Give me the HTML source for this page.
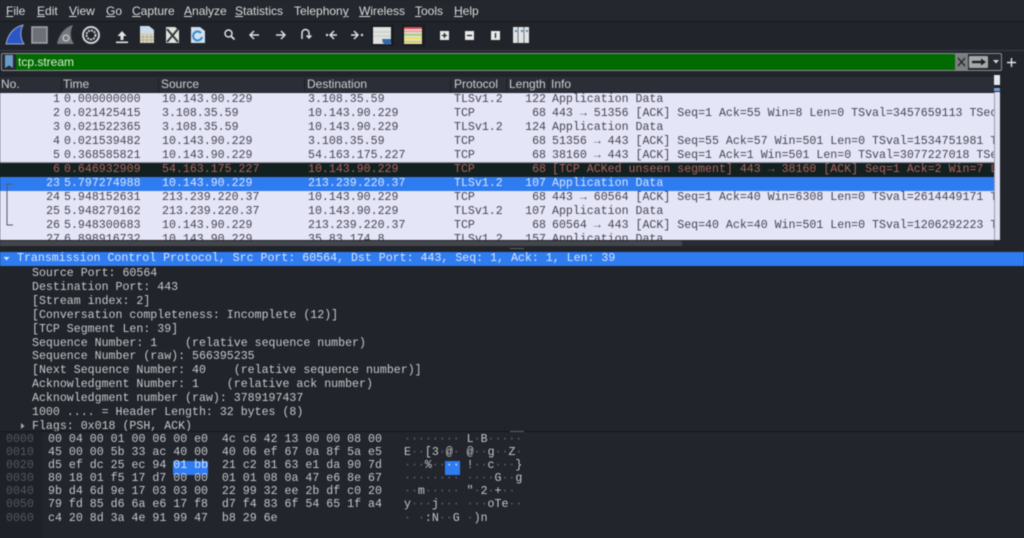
<!DOCTYPE html>
<html><head><meta charset="utf-8">
<style>
html,body{margin:0;padding:0;width:1024px;height:538px;overflow:hidden;background:#21242b}
#w{position:relative;width:1024px;height:538px;overflow:hidden;filter:blur(.45px);font-family:"Liberation Sans",sans-serif}
.a{position:absolute}
.m{position:absolute;top:4px;font-size:12px;line-height:14px;color:#dcdcdc;white-space:pre}
.h{position:absolute;top:77px;font-size:12px;line-height:15px;color:#cfd0d3;white-space:pre}
.s{position:absolute;top:78px;width:1px;height:14px;background:#1d1f25}
#list{position:absolute;left:0;top:93px;width:994px;height:147px;overflow:hidden;background:#e5e5f8;font:11.6px/14px "Liberation Mono",monospace;color:#45454f}
.r{position:relative;height:14px;white-space:pre}
.r span{position:absolute;top:0}
.n{right:934px}.t{left:64px}.c1{left:162px}.c2{left:308px}.c3{left:454px}.l{right:448px}.i{left:552px}
.blk{background:#12201f;color:#b0635d}
.sel{background:#2f7bf0;color:#d6e6fb}
#tree{position:absolute;left:0;top:267px;width:1024px;height:164px;overflow:hidden;font:11.6px/13.9px "Liberation Mono",monospace;color:#c9cacc;white-space:pre}
#tree div{padding-left:32px}
#hex,#off,#asc{position:absolute;top:433px;font:11.6px/13.1px "Liberation Mono",monospace;white-space:pre}
#hex{left:48px;color:#c6c7ca}
#off{left:6px;color:#54575e}
#asc{left:404px;color:#c6c7ca}
#asc i{font-style:normal;color:#5f626a}
</style></head><body><div id="w">
<div class="a" style="left:0;top:0;width:1024px;height:21px;background:#24272e"></div>
<div class="a" style="left:0;top:21px;width:1024px;height:1px;background:#16181c"></div>
<span class="m" style="left:6px"><u>F</u>ile</span>
<span class="m" style="left:37px"><u>E</u>dit</span>
<span class="m" style="left:69px"><u>V</u>iew</span>
<span class="m" style="left:106px"><u>G</u>o</span>
<span class="m" style="left:132px"><u>C</u>apture</span>
<span class="m" style="left:184px"><u>A</u>nalyze</span>
<span class="m" style="left:235px"><u>S</u>tatistics</span>
<span class="m" style="left:294px">Telephon<u>y</u></span>
<span class="m" style="left:359px"><u>W</u>ireless</span>
<span class="m" style="left:415px"><u>T</u>ools</span>
<span class="m" style="left:454px"><u>H</u>elp</span>

<svg class="a" style="left:0;top:22px" width="540" height="28" viewBox="0 0 540 28">
<path d="M6 22 C8 12 14 5 23 3 C20 9 20 16 24 22Z" fill="#2b56c8" stroke="#9aa8c8" stroke-width="1"/>
<rect x="32" y="5" width="15" height="16" fill="#6d7078" stroke="#a4a6ab" stroke-width="1.5"/>
<path d="M57 22 C59 12 65 5 73 3 C70 9 70 16 74 22Z" fill="#75777c"/>
<circle cx="66" cy="16" r="3" fill="none" stroke="#c4c5c8" stroke-width="1.3"/>
<circle cx="91" cy="13" r="8" fill="none" stroke="#d2d3d5" stroke-width="2"/>
<circle cx="91" cy="13" r="4.500" fill="none" stroke="#d2d3d5" stroke-width="2" stroke-dasharray="2 1"/>
<path d="M122 9 L117.500 14 H120.500 V18 H123.500 V14 H126.500Z" fill="#e4e4e4"/>
<rect x="116" y="19.500" width="12" height="1.600" fill="#e4e4e4"/>
<path d="M140 5 H150 L154 8 V21 H140Z" fill="#d9d5bc"/>
<path d="M140 4 H149 L154 8 V11 H140Z" fill="#c9dcee"/>
<path d="M143 12 V21 M147 12 V21 M151 12 V21 M140 15 H154 M140 18 H154" stroke="#a9a68e" stroke-width=".7"/>
<path d="M166 5 H175 L179 8 V21 H166Z" fill="#e0e3dc"/>
<path d="M167 7 L178 20 M178 7 L167 20" stroke="#33363a" stroke-width="2"/>
<path d="M191 5 H200 L205 9 V21 H191Z" fill="#cfe0f0"/>
<path d="M201 11 A4.500 4.500 0 1 0 202 15" fill="none" stroke="#3a88c8" stroke-width="2"/>
<circle cx="228.500" cy="11.500" r="3.500" fill="none" stroke="#e0e0e0" stroke-width="1.500"/>
<path d="M231 14 L234.500 17.500" stroke="#e0e0e0" stroke-width="1.800"/>
<path d="M259 13 H250 M254 9 L250 13 L254 17" fill="none" stroke="#e0e0e0" stroke-width="1.500"/>
<path d="M276 13 H285 M281 9 L285 13 L281 17" fill="none" stroke="#e0e0e0" stroke-width="1.500"/>
<path d="M302 17 V11 A3.500 3.500 0 0 1 309 11 V15 M306.500 13.500 L309 16 L311.500 13.500" fill="none" stroke="#e0e0e0" stroke-width="1.500"/>
<circle cx="327" cy="13" r="1.200" fill="#e0e0e0"/>
<path d="M337 13 H330 M334 9 L330 13 L334 17" fill="none" stroke="#e0e0e0" stroke-width="1.500"/>
<circle cx="362" cy="13" r="1.200" fill="#e0e0e0"/>
<path d="M351 13 H358 M354 9 L358 13 L354 17" fill="none" stroke="#e0e0e0" stroke-width="1.500"/>
<rect x="371" y="3" width="23" height="21" fill="#191b20"/>
<rect x="402" y="3" width="23" height="21" fill="#191b20"/>
<rect x="373" y="5" width="18" height="17" fill="#dfe1df"/>
<path d="M373 10 H391 M373 14 H391" stroke="#c6c8c6" stroke-width="1"/>
<path d="M382 17 H391 V21 L387 23 L383 21Z" fill="#2f6aa8"/>
<rect x="404" y="5" width="18" height="17" fill="#e8e8dc"/>
<rect x="404" y="5" width="18" height="2" fill="#d84a4a"/>
<rect x="404" y="8" width="18" height="2.500" fill="#e8a8b8"/>
<rect x="404" y="11.500" width="18" height="2.500" fill="#a8d088"/>
<rect x="404" y="15" width="18" height="2.500" fill="#e8dc78"/>
<rect x="404" y="18.500" width="18" height="2.500" fill="#d8d070"/>
<rect x="440" y="9" width="9" height="9" fill="#e8e8e8"/>
<path d="M442 13.500 H447 M444.500 11 V16" stroke="#222" stroke-width="1.300"/>
<rect x="465" y="9" width="9" height="9" fill="#e8e8e8"/>
<path d="M467 13.500 H472" stroke="#222" stroke-width="1.300"/>
<rect x="491" y="9" width="9" height="9" fill="#e8e8e8"/>
<path d="M495.500 11 V16" stroke="#222" stroke-width="1.300"/>
<rect x="513" y="5" width="16" height="16" fill="#dfe3e4"/>
<path d="M518 5 V21 M524 5 V21" stroke="#70757c" stroke-width="1"/>
<path d="M515 9 H517 M521 9 H523 M526 9 H528" stroke="#5a80a8" stroke-width="2"/>
</svg>

<div class="a" style="left:0;top:50px;width:1024px;height:1px;background:#3a3d44"></div>
<div class="a" style="left:1px;top:53px;width:1001px;height:18px;box-sizing:border-box;border:1px solid #8b8e93;border-radius:2px;background:#26292f"></div>
<div class="a" style="left:16px;top:54px;width:939px;height:16px;background:#016a00"></div>
<svg class="a" style="left:3px;top:55px" width="12" height="14"><path d="M2 0 H10 V13 L6 10.500 L2 13Z" fill="#6a9cc8"/></svg>
<span class="a" style="left:18px;top:55px;font-size:12px;line-height:15px;color:#d8ecd2">tcp.stream</span>
<div class="a" style="left:955px;top:54px;width:13px;height:16px;background:#7c7e80"></div>
<svg class="a" style="left:955px;top:54px" width="13" height="16"><path d="M3 4 L10 12 M10 4 L3 12" stroke="#2a2c30" stroke-width="1.400"/></svg>
<div class="a" style="left:969px;top:56px;width:19px;height:12px;background:#a6a8aa;border-radius:1px"></div>
<svg class="a" style="left:969px;top:56px" width="19" height="12"><path d="M3 6 H13" stroke="#1e2024" stroke-width="2.400"/><path d="M12 2.500 L17 6 L12 9.500Z" fill="#1e2024"/></svg>
<svg class="a" style="left:992px;top:59px" width="8" height="6"><path d="M1 1 H7 L4 4.500Z" fill="#d8d8d8"/></svg>
<svg class="a" style="left:1005px;top:56px" width="13" height="13"><path d="M6.500 2 V11 M2 6.500 H11" stroke="#e4e4e4" stroke-width="1.400"/></svg>

<div class="a" style="left:0;top:75px;width:1024px;height:18px;background:#21242b"></div>
<div class="a" style="left:0;top:77px;width:994px;height:15px;background:#2b2e36"></div>
<span class="h" style="left:1px">No.</span><span class="h" style="left:63px">Time</span><span class="h" style="left:161px">Source</span><span class="h" style="left:307px">Destination</span><span class="h" style="left:454px">Protocol</span><span class="h" style="left:509px">Length</span><span class="h" style="left:551px">Info</span>
<i class="s" style="left:61px"></i><i class="s" style="left:158px"></i><i class="s" style="left:304px"></i><i class="s" style="left:450px"></i><i class="s" style="left:506px"></i><i class="s" style="left:548px"></i>

<div id="list">
<div class="r"><span class="n">1</span><span class="t">0.000000000</span><span class="c1">10.143.90.229</span><span class="c2">3.108.35.59</span><span class="c3">TLSv1.2</span><span class="l">122</span><span class="i">Application Data</span></div>
<div class="r"><span class="n">2</span><span class="t">0.021425415</span><span class="c1">3.108.35.59</span><span class="c2">10.143.90.229</span><span class="c3">TCP</span><span class="l">68</span><span class="i">443 → 51356 [ACK] Seq=1 Ack=55 Win=8 Len=0 TSval=3457659113 TSecr=1534751981</span></div>
<div class="r"><span class="n">3</span><span class="t">0.021522365</span><span class="c1">3.108.35.59</span><span class="c2">10.143.90.229</span><span class="c3">TLSv1.2</span><span class="l">124</span><span class="i">Application Data</span></div>
<div class="r"><span class="n">4</span><span class="t">0.021539482</span><span class="c1">10.143.90.229</span><span class="c2">3.108.35.59</span><span class="c3">TCP</span><span class="l">68</span><span class="i">51356 → 443 [ACK] Seq=55 Ack=57 Win=501 Len=0 TSval=1534751981 TSecr=3457659113</span></div>
<div class="r"><span class="n">5</span><span class="t">0.368585821</span><span class="c1">10.143.90.229</span><span class="c2">54.163.175.227</span><span class="c3">TCP</span><span class="l">68</span><span class="i">38160 → 443 [ACK] Seq=1 Ack=1 Win=501 Len=0 TSval=3077227018 TSecr=1</span></div>
<div class="r blk"><span class="n">6</span><span class="t">0.646932909</span><span class="c1">54.163.175.227</span><span class="c2">10.143.90.229</span><span class="c3">TCP</span><span class="l">68</span><span class="i">[TCP ACKed unseen segment] 443 → 38160 [ACK] Seq=1 Ack=2 Win=7 Len=0</span></div>
<div class="r sel"><span class="n">23</span><span class="t">5.797274988</span><span class="c1">10.143.90.229</span><span class="c2">213.239.220.37</span><span class="c3">TLSv1.2</span><span class="l">107</span><span class="i">Application Data</span></div>
<div class="r"><span class="n">24</span><span class="t">5.948152631</span><span class="c1">213.239.220.37</span><span class="c2">10.143.90.229</span><span class="c3">TCP</span><span class="l">68</span><span class="i">443 → 60564 [ACK] Seq=1 Ack=40 Win=6308 Len=0 TSval=2614449171 TSecr=1</span></div>
<div class="r"><span class="n">25</span><span class="t">5.948279162</span><span class="c1">213.239.220.37</span><span class="c2">10.143.90.229</span><span class="c3">TLSv1.2</span><span class="l">107</span><span class="i">Application Data</span></div>
<div class="r"><span class="n">26</span><span class="t">5.948300683</span><span class="c1">10.143.90.229</span><span class="c2">213.239.220.37</span><span class="c3">TCP</span><span class="l">68</span><span class="i">60564 → 443 [ACK] Seq=40 Ack=40 Win=501 Len=0 TSval=1206292223 TSecr=2</span></div>
<div class="r"><span class="n">27</span><span class="t">6.898916732</span><span class="c1">10.143.90.229</span><span class="c2">35.83.174.8</span><span class="c3">TLSv1.2</span><span class="l">157</span><span class="i">Application Data</span></div>
</div>
<div class="a" style="left:0;top:162px;width:994px;height:1px;background:#8e9096"></div>
<svg class="a" style="left:0;top:176px" width="20" height="56"><path d="M13 8 H7 V49 H13" fill="none" stroke="#565a68" stroke-width="1"/></svg>

<div class="a" style="left:994px;top:92px;width:6px;height:148px;background:#e0e2f2;border-left:1px solid #9a9cb0;box-sizing:border-box"></div>
<div class="a" style="left:994px;top:75px;width:6px;height:10px;background:#e6e8ef"></div>
<div class="a" style="left:994px;top:88px;width:6px;height:3px;background:#7da4d8"></div>
<div class="a" style="left:0;top:241px;width:682px;height:5px;background:#44464b"></div>
<div class="a" style="left:682px;top:241px;width:312px;height:5px;background:#2a2c31"></div>
<div class="a" style="left:510px;top:248px;width:14px;height:1px;background:#5c5f66"></div>

<div class="a" style="left:0;top:252px;width:1024px;height:14px;background:#2f7bf0"></div>
<span class="a" style="left:17px;top:252px;font:11.6px/14px 'Liberation Mono',monospace;color:#d6e6fb;white-space:pre">Transmission Control Protocol, Src Port: 60564, Dst Port: 443, Seq: 1, Ack: 1, Len: 39</span>
<svg class="a" style="left:3px;top:256px" width="8" height="6"><path d="M0.500 1 H6.500 L3.500 4.500Z" fill="#d6e6fb"/></svg>

<div id="tree"><div>Source Port: 60564</div><div>Destination Port: 443</div><div>[Stream index: 2]</div><div>[Conversation completeness: Incomplete (12)]</div><div>[TCP Segment Len: 39]</div><div>Sequence Number: 1    (relative sequence number)</div><div>Sequence Number (raw): 566395235</div><div>[Next Sequence Number: 40    (relative sequence number)]</div><div>Acknowledgment Number: 1    (relative ack number)</div><div>Acknowledgment number (raw): 3789197437</div><div>1000 .... = Header Length: 32 bytes (8)</div><div>Flags: 0x018 (PSH, ACK)</div></div>
<svg class="a" style="left:20px;top:422px" width="6" height="8"><path d="M1 1 L4.500 4 L1 7Z" fill="#a8a9ac"/></svg>

<div class="a" style="left:0;top:431px;width:1024px;height:107px;background:#22252c"></div>
<div class="a" style="left:0;top:431px;width:1024px;height:1px;background:#15171b"></div>
<div class="a" style="left:0;top:432px;width:42px;height:106px;background:#1e2127"></div>
<div class="a" style="left:173px;top:461px;width:35px;height:14px;background:#2f7bf0"></div>
<div class="a" style="left:445px;top:461px;width:15px;height:14px;background:#2f7bf0"></div>
<div class="a" style="left:510px;top:431px;width:14px;height:1px;background:#5c5f66"></div>
<div id="off">0000
0010
0020
0030
0040
0050
0060</div>
<div id="hex">00 04 00 01 00 06 00 e0  4c c6 42 13 00 00 08 00
45 00 00 5b 33 ac 40 00  40 06 ef 67 0a 8f 5a e5
d5 ef dc 25 ec 94 <span style="color:#d6e6fb">01 bb</span>  21 c2 81 63 e1 da 90 7d
80 18 01 f5 17 d7 00 00  01 01 08 0a 47 e6 8e 67
9b d4 6d 9e 17 03 03 00  22 99 32 ee 2b df c0 20
79 fd 85 d6 6a e6 17 f8  d7 f4 83 6f 54 65 1f a4
c4 20 8d 3a 4e 91 99 47  b8 29 6e</div>
<div id="asc"><i>········</i> L<i>·</i>B<i>·····</i>
E<i>··</i>[3<i>·</i>@<i>·</i> @<i>··</i>g<i>··</i>Z<i>·</i>
<i>···</i>%<i>··</i><span style="color:#d6e6fb">··</span> !<i>··</i>c<i>···</i>}
<i>········</i> <i>····</i>G<i>··</i>g
<i>··</i>m<i>·····</i> "<i>·</i>2<i>·</i>+<i>··</i>
y<i>···</i>j<i>···</i> <i>···</i>oTe<i>··</i>
<i>·</i> <i>·</i>:N<i>··</i>G <i>·</i>)n</div>
</div></body></html>
